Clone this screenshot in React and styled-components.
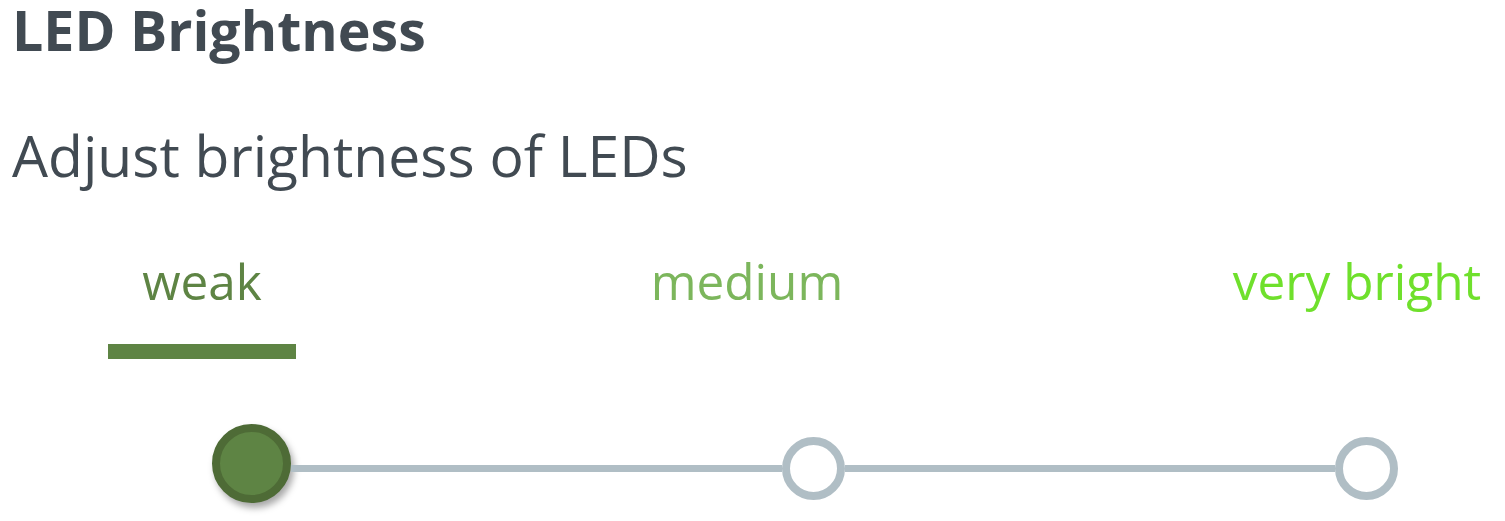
import React from "react";
import styled, { createGlobalStyle } from "styled-components";

const Global = createGlobalStyle`
  html, body { margin: 0; padding: 0; background: #ffffff; }
  body { font-family: "Open Sans", "Noto Sans", sans-serif; }
`;

const Page = styled.div`
  width: 1505px;
  height: 521px;
  overflow: hidden;
  display: flex;
  flex-direction: column;
`;

const Title = styled.h1`
  margin: 0;
  padding-left: 12px;
  font-size: 55.5px;
  line-height: 60px;
  font-weight: 700;
  color: #414a52;
`;

const Subtitle = styled.p`
  margin: 60px 0 0;
  padding-left: 12px;
  font-size: 57px;
  line-height: 70px;
  font-weight: 400;
  color: #414a52;
`;

const Options = styled.div`
  display: flex;
  margin-top: 61px;
  padding-left: 108px;
`;

const Option = styled.div`
  display: flex;
  flex-direction: column;
  align-items: center;
  width: ${(p) => p.$width}px;
  margin-left: ${(p) => p.$offset || 0}px;
`;

const OptionLabel = styled.span`
  font-size: 49.5px;
  line-height: 60px;
  white-space: nowrap;
  color: ${(p) => p.$color};
`;

const Underline = styled.div`
  align-self: stretch;
  height: 15px;
  margin-top: 33px;
  background: ${(p) => (p.$active ? "#5e8444" : "transparent")};
`;

const Slider = styled.div`
  display: flex;
  align-items: center;
  height: 86px;
  margin-top: 66px;
  padding: 0 107px 0 212px;
`;

const Knob = styled.div`
  flex: none;
  box-sizing: border-box;
  width: 79px;
  height: 79px;
  margin-bottom: 10px;
  border-radius: 50%;
  border: 8px solid #4e6b36;
  background: #5e8444;
  box-shadow: 3px 5px 7px rgba(0, 0, 0, 0.35);
`;

const Track = styled.div`
  flex: 1;
  height: 7px;
  background: #b0bec5;
`;

const Stop = styled.div`
  flex: none;
  box-sizing: border-box;
  width: 63px;
  height: 63px;
  border-radius: 50%;
  border: 8px solid #b0bec5;
  background: #ffffff;
`;

const options = [
  { label: "weak", color: "#5e8444", width: 188, offset: 0, active: true },
  { label: "medium", color: "#7cb65c", width: 200, offset: 351 },
  { label: "very bright", color: "#6fe02c", width: 260, offset: 380 },
];

export default function App() {
  return (
    <>
      <Global />
      <Page>
        <Title>LED Brightness</Title>
        <Subtitle>Adjust brightness of LEDs</Subtitle>
        <Options>
          {options.map((o) => (
            <Option key={o.label} $width={o.width} $offset={o.offset}>
              <OptionLabel $color={o.color}>{o.label}</OptionLabel>
              <Underline $active={o.active} />
            </Option>
          ))}
        </Options>
        <Slider>
          <Knob />
          <Track />
          <Stop />
          <Track />
          <Stop />
        </Slider>
      </Page>
    </>
  );
}
